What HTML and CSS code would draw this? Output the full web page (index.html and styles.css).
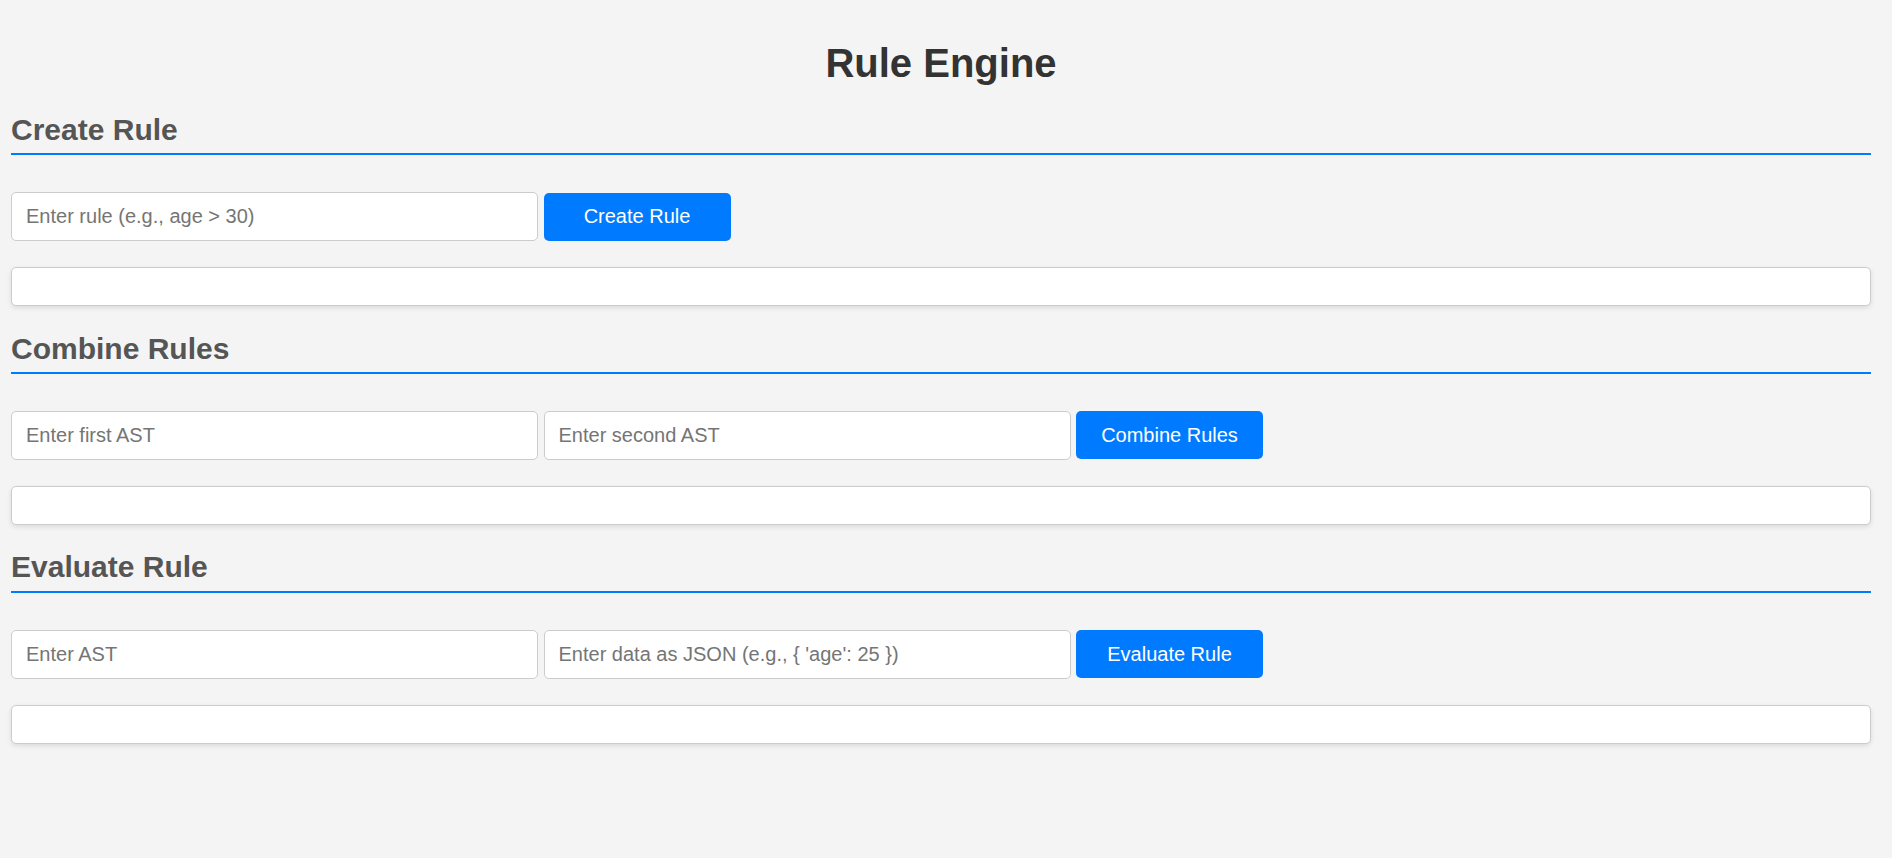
FILE: index.html
```html
<!DOCTYPE html>
<html lang="en">
<head>
<meta charset="utf-8">
<title>Rule Engine</title>
<link rel="stylesheet" href="styles.css">
</head>
<body>
  <h1 class="title">Rule Engine</h1>

  <section class="section">
    <h2 class="section-title">Create Rule</h2>
    <div class="row">
      <input class="field" type="text" placeholder="Enter rule (e.g., age &gt; 30)">
      <button class="btn">Create Rule</button>
    </div>
    <div class="result"></div>
  </section>

  <section class="section">
    <h2 class="section-title">Combine Rules</h2>
    <div class="row">
      <input class="field" type="text" placeholder="Enter first AST">
      <input class="field" type="text" placeholder="Enter second AST">
      <button class="btn">Combine Rules</button>
    </div>
    <div class="result"></div>
  </section>

  <section class="section">
    <h2 class="section-title">Evaluate Rule</h2>
    <div class="row">
      <input class="field" type="text" placeholder="Enter AST">
      <input class="field" type="text" placeholder="Enter data as JSON (e.g., { 'age': 25 })">
      <button class="btn">Evaluate Rule</button>
    </div>
    <div class="result"></div>
  </section>
</body>
</html>
```

FILE: styles.css
```css
* {
  box-sizing: border-box;
}

html, body {
  margin: 0;
  background: #f4f4f4;
}

body {
  padding: 40.5px 21px 0 11px;
  font-family: "Liberation Sans", Arial, sans-serif;
  color: #333;
}

.title {
  margin: 0 0 27.6px;
  font-size: 40px;
  font-weight: bold;
  line-height: normal;
  color: #333;
  text-align: center;
}

.section {
  margin-bottom: 25.5px;
}

.section-title {
  margin: 0;
  font-size: 30px;
  font-weight: bold;
  line-height: normal;
  color: #555;
  padding-bottom: 6.2px;
  border-bottom: 2.5px solid #007bff;
}

.row {
  display: flex;
  align-items: center;
  gap: 5.5px;
  margin-top: 37px;
  height: 49px;
}

.field {
  width: 527px;
  height: 49px;
  padding: 0 14px;
  border: 1px solid #ccc;
  border-radius: 5px;
  background: #fff;
  font-family: "Liberation Sans", Arial, sans-serif;
  font-size: 20px;
  color: #333;
  outline: none;
}

.field::placeholder {
  color: #757575;
}

.btn {
  width: 187px;
  height: 48px;
  border: none;
  border-radius: 5px;
  background: #007bff;
  color: #fff;
  font-family: "Liberation Sans", Arial, sans-serif;
  font-size: 20px;
  cursor: pointer;
}

.result {
  margin-top: 26px;
  height: 39px;
  background: #fff;
  border: 1px solid #ccc;
  border-radius: 5px;
  box-shadow: 0 2px 5px rgba(0, 0, 0, 0.1);
}
```
